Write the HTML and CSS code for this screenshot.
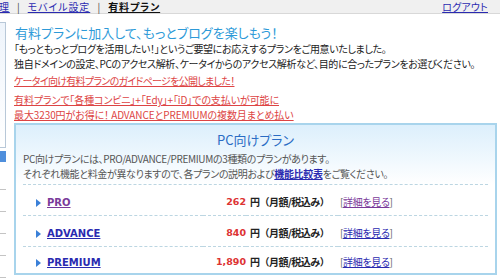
FILE: index.html
```html
<!DOCTYPE html>
<html lang="ja">
<head>
    <meta charset="UTF-8">
    <title>有料プラン</title>
    <link rel="stylesheet" href="styles.css">
</head>
<body>
    <div class="topbar">
        <div class="crumbs">
            <a href="#">管理</a>
            <span class="sep">|</span>
            <a href="#">モバイル設定</a>
            <span class="sep">|</span>
            <a href="#" class="current">有料プラン</a>
        </div>
        <a href="#" class="logout">ログアウト</a>
    </div>
    <div class="page">
        <div class="side">
            <div class="side-box"></div>
            <div class="side-bar"></div>
            <ul class="side-list">
                <li></li><li></li><li></li><li></li><li></li>
            </ul>
        </div>
        <div class="main">
            <h1>有料プランに加入して、もっとブログを楽しもう！</h1>
            <p class="lead">「もっともっとブログを活用したい！」というご要望にお応えするプランをご用意いたしました。<br>独自ドメインの設定、PCのアクセス解析、ケータイからのアクセス解析など、目的に合ったプランをお選びください。</p>
            <p class="notice"><a href="#" class="guide">ケータイ向け有料プランのガイドページを公開しました！</a></p>
            <p class="notice notice-pair"><a href="#">有料プランで「各種コンビニ」+「Edy」+「iD」での支払いが可能に</a><br><a href="#">最大3230円がお得に！ ADVANCEとPREMIUMの複数月まとめ払い</a></p>

            <div class="planbox">
                <h2>PC向けプラン</h2>
                <p class="desc">PC向けプランには、PRO/ADVANCE/PREMIUMの3種類のプランがあります。<br>それぞれ機能と料金が異なりますので、各プランの説明および<a href="#">機能比較表</a>をご覧ください。</p>
                <table class="plans">
                    <colgroup>
                        <col class="c-name">
                        <col class="c-price">
                        <col class="c-unit">
                        <col>
                    </colgroup>
                    <tr>
                        <td class="name"><span class="arrow"></span><a href="#" class="visited">PRO</a></td>
                        <td class="price">262</td>
                        <td class="unit">円（月額/税込み）</td>
                        <td class="more">[<a href="#" class="visited">詳細を見る</a>]</td>
                    </tr>
                    <tr>
                        <td class="name"><span class="arrow"></span><a href="#">ADVANCE</a></td>
                        <td class="price">840</td>
                        <td class="unit">円（月額/税込み）</td>
                        <td class="more">[<a href="#">詳細を見る</a>]</td>
                    </tr>
                    <tr>
                        <td class="name"><span class="arrow"></span><a href="#">PREMIUM</a></td>
                        <td class="price">1,890</td>
                        <td class="unit">円（月額/税込み）</td>
                        <td class="more">[<a href="#">詳細を見る</a>]</td>
                    </tr>
                </table>
            </div>
        </div>
    </div>
</body>
</html>
```

FILE: styles.css
```css
body {
    margin: 0;
    background-color: #fff;
    color: #222;
    font-family: "Noto Sans CJK JP", sans-serif;
    font-size: 10px;
    font-feature-settings: "palt";
    letter-spacing: -0.35px;
    overflow: hidden;
}
a {
    color: #2a2ab0;
}
.topbar {
    display: flex;
    justify-content: space-between;
    align-items: center;
    height: 13px;
    padding: 0 12px 0 0;
    background-color: #f0f0f0;
    border-bottom: 1px solid #d8d8d8;
    line-height: 13px;
    white-space: nowrap;
}
.crumbs {
    margin-left: -12px;
    letter-spacing: 0.9px;
}
.crumbs .sep {
    color: #444;
    margin: 0 4px;
}
.crumbs .current {
    color: #111;
    font-weight: bold;
}
.logout {
    color: #2a2ab0;
    letter-spacing: 0.2px;
}
.page {
    display: flex;
    gap: 8px;
}
.side {
    width: 6px;
    flex: none;
    overflow: hidden;
    padding-top: 8px;
}
.side-box {
    height: 124px;
    border: 1px solid #b8c8d8;
    border-left: none;
    background: linear-gradient(#eef4fb, #fff);
}
.side-bar {
    height: 11px;
    margin-top: 3px;
    background-color: #4f8fdc;
}
.side-list {
    list-style: none;
    margin: 6px 0 0;
    padding: 0;
}
.side-list li {
    height: 21px;
    border-bottom: 1px solid #c4c4c4;
}
.main {
    flex: 1;
    padding-right: 3px;
}
h1 {
    margin: 10px 0 0 1px;
    font-size: 13px;
    font-weight: normal;
    color: #2d9ad8;
    line-height: 17px;
    letter-spacing: 0;
}
.lead {
    margin: 0;
    line-height: 15px;
}
.notice {
    margin: 2px 0 0;
    line-height: 15px;
}
.notice a {
    color: #dd4444;
    letter-spacing: -0.1px;
}
.notice a.guide {
    letter-spacing: -0.7px;
}
.notice-pair {
    margin-top: 4px;
}
.planbox {
    margin-top: 1px;
    border: 2px solid #a8d4ec;
    background: linear-gradient(#dceffc, #fff 60px);
    padding: 0 7px;
}
h2 {
    margin: 6px 0 0;
    text-align: center;
    font-size: 13px;
    font-weight: normal;
    color: #2a6cc4;
    line-height: 17px;
    letter-spacing: 0;
}
.desc {
    margin: 3px 0 0;
    color: #555;
    line-height: 15px;
    padding-bottom: 3px;
    border-bottom: 1px dashed #bcd6e2;
}
.desc a {
    color: #2a2ab0;
    font-weight: bold;
}
.plans {
    width: 100%;
    table-layout: fixed;
    border-collapse: collapse;
}
.c-name {
    width: 180px;
}
.c-price {
    width: 43px;
}
.c-unit {
    width: 92px;
}
.plans td {
    height: 28px;
    padding: 2px 0 0;
    border-bottom: 1px dashed #bcd6e2;
    white-space: nowrap;
}
.plans tr:last-child td {
    border-bottom: none;
    height: 24px;
}
.plans td.name {
    padding-left: 13px;
}
.name a {
    font-family: "DejaVu Sans", sans-serif;
    font-weight: bold;
    font-size: 10px;
    letter-spacing: 0;
    color: #2a2ab0;
}
.name a.visited, .more a.visited {
    color: #7a3a9a;
}
.arrow {
    display: inline-block;
    width: 0;
    height: 0;
    border-top: 4px solid transparent;
    border-bottom: 4px solid transparent;
    border-left: 5px solid #3a80d8;
    margin-right: 6px;
    vertical-align: -1px;
}
.price {
    text-align: right;
    font-family: "DejaVu Sans", sans-serif;
    font-weight: bold;
    font-size: 9.5px;
    letter-spacing: 0;
    color: #dd3333;
}
.plans td.unit {
    font-weight: bold;
    font-feature-settings: normal;
    letter-spacing: -0.5px;
    padding-left: 4px;
}
.plans td.more {
    color: #666;
    padding-left: 2px;
}
```
